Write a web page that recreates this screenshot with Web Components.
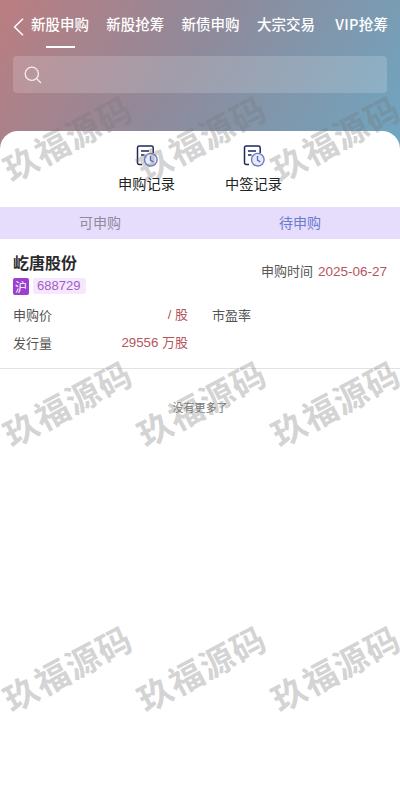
<!DOCTYPE html>
<html lang="zh">
<head>
<meta charset="utf-8">
<title>新股申购</title>
<style>
html, body { margin: 0; padding: 0; background: #fff; }
body { font-family: "Noto Sans CJK SC", "Liberation Sans", sans-serif; width: 400px; height: 800px; overflow: hidden; position: relative; }
</style>
</head>
<body>
<ipo-page>
  <ipo-header></ipo-header>
  <ipo-sheet>
    <ipo-shortcuts></ipo-shortcuts>
    <ipo-switch></ipo-switch>
    <ipo-stock></ipo-stock>
    <ipo-end>没有更多了</ipo-end>
  </ipo-sheet>
</ipo-page>
<ipo-watermark></ipo-watermark>

<script>
const define = (name, html) => {
    customElements.define(name, class extends HTMLElement {
        constructor() {
            super();
            this.attachShadow({mode: 'open'});
            this.shadowRoot.innerHTML = html;
        }
    });
};

define('ipo-page', `
<style>
:host { display: block; background: linear-gradient(122deg, #bb7d80 0, #8f8a9b 46%, #6ea6c1 100%) no-repeat; background-size: 100% 150px; }
</style>
<slot></slot>
`);

define('ipo-header', `
<style>
:host { display: block; height: 131px; color: #fff; }
nav { display: flex; align-items: flex-start; height: 48px; padding-left: 13px; white-space: nowrap; }
svg { display: block; }
.back { margin-top: 18px; margin-right: 7px; flex: none; }
a { font-size: 14.5px; line-height: 20px; margin-top: 14px; margin-right: 17.300px; font-weight: 500; position: relative; height: 34px; flex: none; }
a.on::after { content: ''; position: absolute; left: 15px; width: 29px; height: 2px; bottom: 0; background: #fff; }
.vip { margin-left: 3px; letter-spacing: .35px; }
.search { margin: 8px 13px 0; height: 37px; background: rgba(255,255,255,.17); border-radius: 4px; display: flex; align-items: center; padding-left: 11px; }
</style>
<nav>
  <svg class="back" width="11" height="18" viewBox="0 0 11 18" fill="none" stroke="#fff" stroke-width="1.5"><path d="M10 .8 1.6 9l8.4 8.2"/></svg>
  <a class="on">新股申购</a><a>新股抢筹</a><a>新债申购</a><a>大宗交易</a><a class="vip">VIP抢筹</a>
</nav>
<div class="search">
  <svg width="18" height="18" viewBox="0 0 18 18" fill="none" stroke="#fff" stroke-opacity=".85" stroke-width="1.3"><circle cx="7.8" cy="7.8" r="6.6"/><path d="m13 13 4 4"/></svg>
</div>
`);

define('ipo-sheet', `
<style>
:host { display: block; background: #fff; border-radius: 18px 18px 0 0; height: 669px; }
</style>
<slot></slot>
`);

const recordIcon = `
<svg width="24" height="24" viewBox="0 0 24 24" fill="none">
  <path d="M7 20.500H4.200c-1 0-1.700-.7-1.700-1.700V3.700C2.500 2.700 3.200 2 4.200 2h12.300c1 0 1.700.7 1.700 1.700V9" stroke="#1d2a5c" stroke-width="1.500"/>
  <path d="M6 7h8M6 11h3.500" stroke="#1d2a5c" stroke-width="1.500"/>
  <circle cx="15.800" cy="15.700" r="6.300" fill="#e7eaf7" stroke="#6d7cc6" stroke-width="1.400"/>
  <path d="M15.500 12v4.200l2.800 1.700" stroke="#5666b8" stroke-width="1.300"/>
</svg>`;

define('ipo-shortcuts', `
<style>
:host { display: flex; justify-content: center; gap: 49px; height: 76px; padding-top: 13px; box-sizing: border-box; color: #222; }
div { display: flex; flex-direction: column; align-items: center; width: 58px; font-size: 14.200px; line-height: 20px; white-space: nowrap; }
svg { display: block; margin-bottom: 5px; }
</style>
<div>${recordIcon}<span>申购记录</span></div>
<div>${recordIcon}<span>中签记录</span></div>
`);

define('ipo-switch', `
<style>
:host { display: grid; grid-template-columns: 1fr 1fr; height: 32px; background: #e6dcfb; font-size: 14px; line-height: 31px; text-align: center; }
.off { color: #8f8a9c; }
.on { color: #6a7bd0; }
</style>
<div class="off">可申购</div>
<div class="on">待申购</div>
`);

define('ipo-stock', `
<style>
:host { display: block; height: 129px; padding: 0 13px; border-bottom: 1px solid #e2e2e2; color: #555; font-size: 13px; }
.top { display: flex; justify-content: space-between; align-items: center; height: 58px; padding-top: 12px; box-sizing: border-box; }
.name { font-size: 16px; font-weight: 700; line-height: 24px; color: #2b2b2b; margin-top: -4px; }
.code { display: flex; align-items: center; gap: 4px; margin-top: 4px; }
.tag { width: 16px; height: 17px; border-radius: 2px; background: #9b3fd0; color: #fff; font-size: 12px; line-height: 17px; text-align: center; }
.num { padding: 0 4px 0 4px; min-width: 45px; height: 16px; line-height: 16px; background: #f6e8fc; color: #a25dc9; font-size: 13px; font-family: "Liberation Sans", sans-serif; border-radius: 2px; }
.red { color: #b4555d; font-family: "Liberation Sans", "Noto Sans CJK SC", sans-serif; font-size: 13px; }
.red b { font-weight: 400; font-size: 13.300px; }
.time { margin-top: -7px; }
.time .red { font-size: 13.500px; margin-left: 2px; }
.row { display: grid; grid-template-columns: 175px 1fr; column-gap: 24px; line-height: 20px; margin-top: 8px; }
.row > div { display: flex; justify-content: space-between; }
</style>
<div class="top">
  <div>
    <div class="name">屹唐股份</div>
    <div class="code"><span class="tag">沪</span><span class="num">688729</span></div>
  </div>
  <div class="time">申购时间 <span class="red">2025-06-27</span></div>
</div>
<div class="row"><div><span>申购价</span><span class="red">/ 股</span></div><div><span>市盈率</span></div></div>
<div class="row"><div><span>发行量</span><span class="red"><b>29556</b> 万股</span></div><div></div></div>
`);

define('ipo-end', `
<style>
:host { display: block; text-align: center; font-size: 11px; line-height: 14px; color: #777; padding-top: 31px; }
</style>
<slot></slot>
`);

define('ipo-watermark', `
<style>
:host { position: absolute; left: 0; top: 0; width: 400px; height: 800px; padding-top: 5px; box-sizing: border-box; overflow: hidden; pointer-events: none; display: grid; grid-template-columns: repeat(3, 134px); grid-auto-rows: 265px; }
span { display: flex; align-items: center; justify-content: center; white-space: nowrap; font-size: 34px; line-height: 1; font-weight: 700; letter-spacing: 1px; color: rgba(120,120,120,.32); transform: rotate(-28deg); }
</style>
<span>玖福源码</span><span>玖福源码</span><span>玖福源码</span>
<span>玖福源码</span><span>玖福源码</span><span>玖福源码</span>
<span>玖福源码</span><span>玖福源码</span><span>玖福源码</span>
`);
</script>
</body>
</html>
